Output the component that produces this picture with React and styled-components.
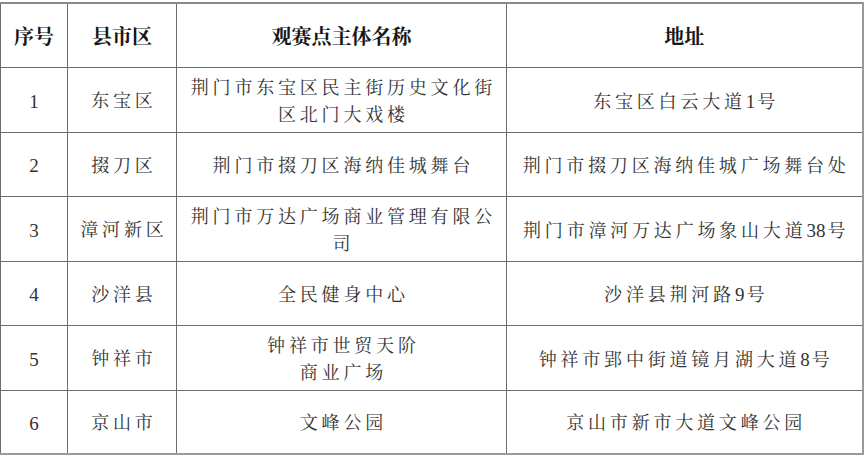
import React from "react";
import styled, { createGlobalStyle } from "styled-components";

const GlobalStyle = createGlobalStyle`
  html, body {
    margin: 0;
    padding: 0;
    background: #ffffff;
  }
  body {
    font-family: "Liberation Serif", "Noto Serif CJK SC", "Noto Sans CJK SC", serif;
  }
`;

const Page = styled.div`
  width: 864px;
  height: 456px;
  padding-top: 2px;
  box-sizing: border-box;
  overflow: hidden;
`;

const Table = styled.table`
  width: 862px;
  border-collapse: collapse;
  table-layout: fixed;
  border-left: 1px solid #d8d8d8;
  border-top: 2px solid #8a8a8a;
  border-right: 2px solid #9a9a9a;
  border-bottom: 2px solid #9a9a9a;
`;

const Row = styled.tr`
  height: ${(p) => p.$h}px;
`;

const HeadCell = styled.th`
  border: 1px solid #6e6e6e;
  padding: 0;
  text-align: center;
  vertical-align: middle;
  font-size: 20px;
  font-weight: bold;
  color: #161616;
  white-space: nowrap;
`;

const Cell = styled.td`
  border: 1px solid #6e6e6e;
  padding: 0;
  padding-top: 4px;
  text-align: center;
  vertical-align: middle;
  font-size: 18px;
  line-height: 27px;
  color: #333333;
  white-space: nowrap;
`;

const Spaced = styled.span`
  letter-spacing: 3.8px;
  margin-right: -3.8px;
`;

const Digits = styled.span`
  font-family: "Liberation Serif", serif;
  font-size: 19px;
  letter-spacing: 0;
  margin-right: 2px;
`;

const Num = styled.span`
  font-family: "Liberation Serif", serif;
  font-size: 19px;
`;

// keep digit runs tight, space the Chinese characters
const Text = ({ children }) => (
  <Spaced>
    {children.split(/(\d+)/).map((part, i) =>
      /^\d+$/.test(part) ? <Digits key={i}>{part}</Digits> : part
    )}
  </Spaced>
);

const rows = [
  { no: "1", area: "东宝区", name: ["荆门市东宝区民主街历史文化街", "区北门大戏楼"], addr: "东宝区白云大道1号" },
  { no: "2", area: "掇刀区", name: ["荆门市掇刀区海纳佳城舞台"], addr: "荆门市掇刀区海纳佳城广场舞台处" },
  { no: "3", area: "漳河新区", name: ["荆门市万达广场商业管理有限公", "司"], addr: "荆门市漳河万达广场象山大道38号" },
  { no: "4", area: "沙洋县", name: ["全民健身中心"], addr: "沙洋县荆河路9号" },
  { no: "5", area: "钟祥市", name: ["钟祥市世贸天阶", "商业广场"], addr: "钟祥市郢中街道镜月湖大道8号" },
  { no: "6", area: "京山市", name: ["文峰公园"], addr: "京山市新市大道文峰公园" },
];

const heights = [65, 64, 65, 64, 65, 64];

export default function App() {
  return (
    <Page>
      <GlobalStyle />
      <Table>
        <colgroup>
          <col style={{ width: 67 }} />
          <col style={{ width: 109 }} />
          <col style={{ width: 330 }} />
          <col style={{ width: 356 }} />
        </colgroup>
        <thead>
          <Row $h={64}>
            <HeadCell>序号</HeadCell>
            <HeadCell>县市区</HeadCell>
            <HeadCell>观赛点主体名称</HeadCell>
            <HeadCell>地址</HeadCell>
          </Row>
        </thead>
        <tbody>
          {rows.map((r, i) => (
            <Row key={r.no} $h={heights[i]}>
              <Cell>
                <Num>{r.no}</Num>
              </Cell>
              <Cell>
                <Text>{r.area}</Text>
              </Cell>
              <Cell>
                {r.name.map((line, j) => (
                  <React.Fragment key={j}>
                    {j > 0 && <br />}
                    <Text>{line}</Text>
                  </React.Fragment>
                ))}
              </Cell>
              <Cell>
                <Text>{r.addr}</Text>
              </Cell>
            </Row>
          ))}
        </tbody>
      </Table>
    </Page>
  );
}
